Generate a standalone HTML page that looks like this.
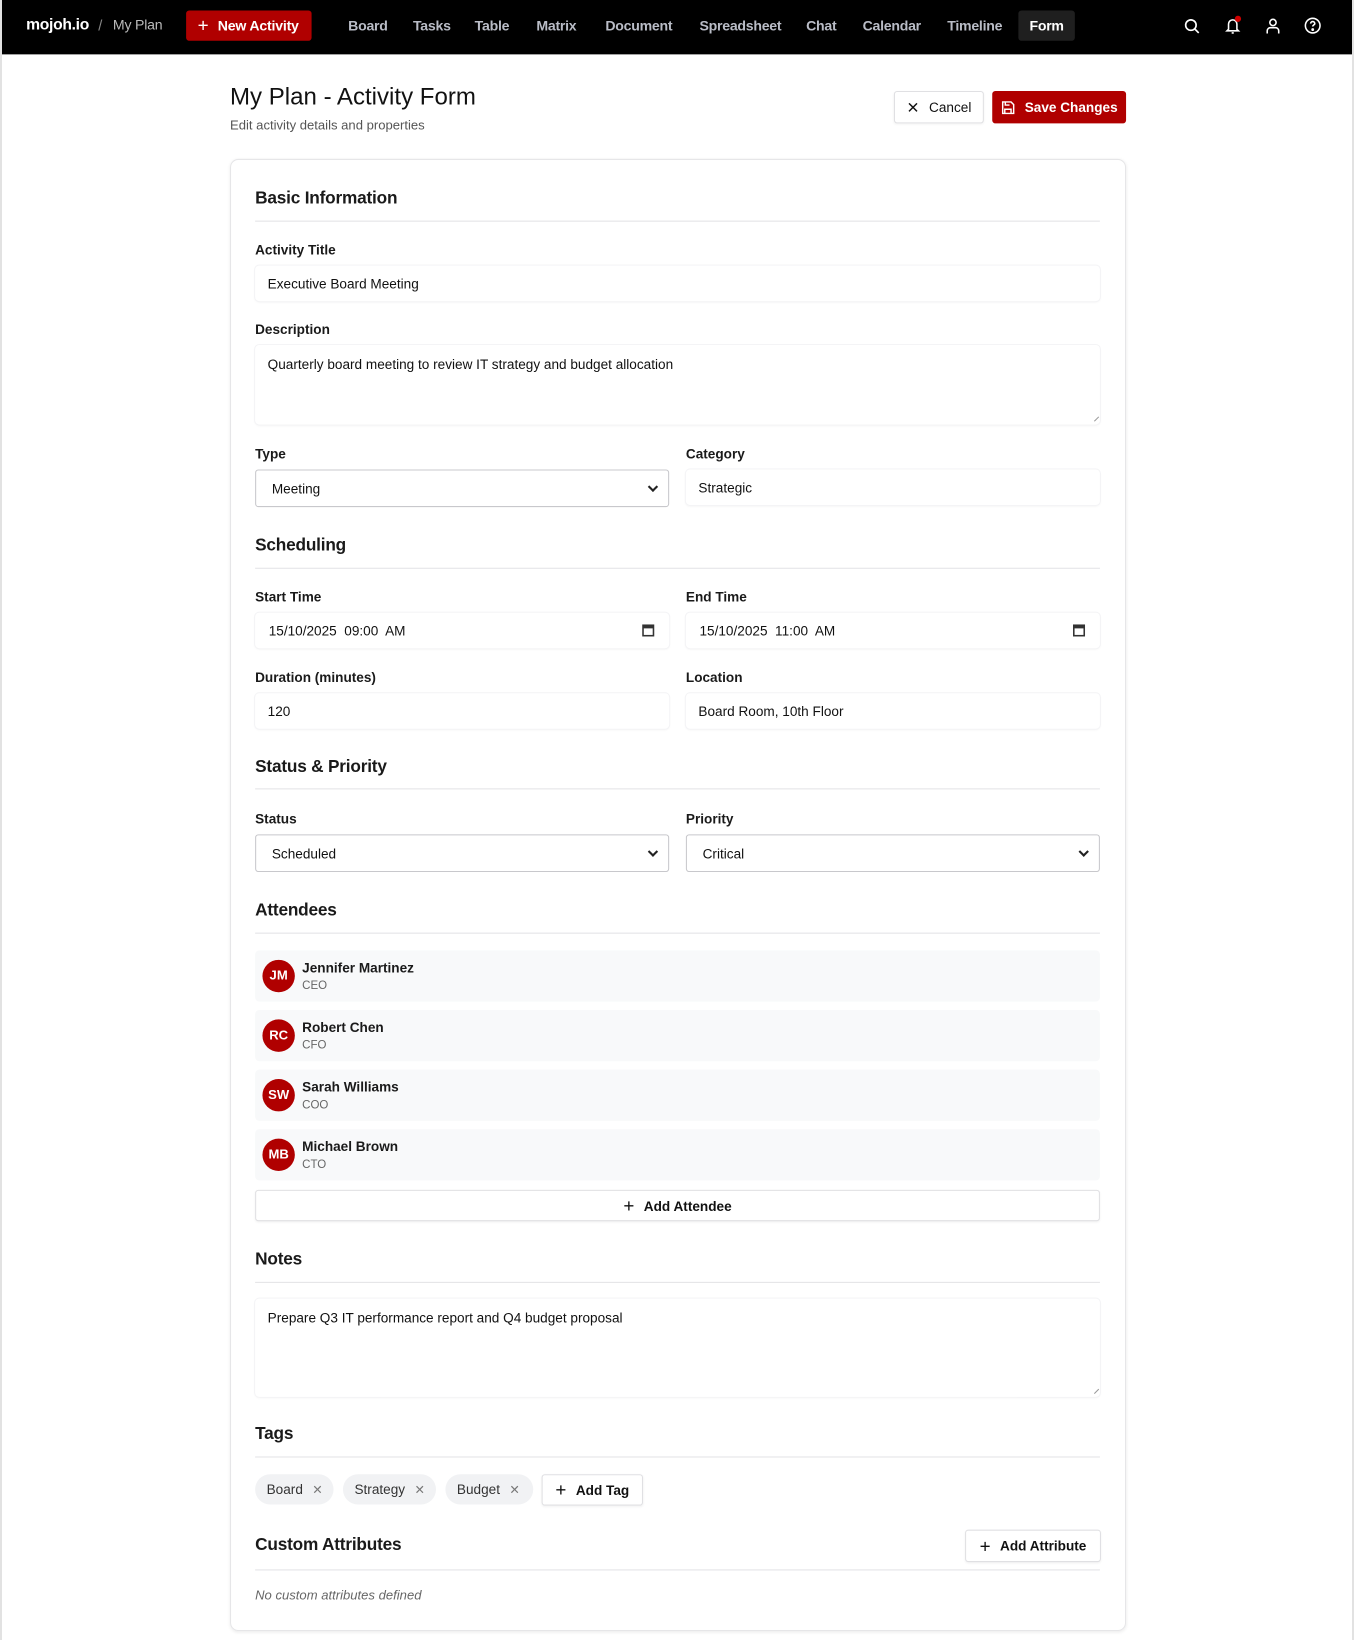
<!DOCTYPE html>
<html><head><meta charset="utf-8">
<style>
*{box-sizing:border-box;margin:0;padding:0}
html,body{width:1354px;height:1640px;overflow:hidden;background:#fff}
body{font-family:"Liberation Sans",Arial,sans-serif;color:#111}
#w{position:absolute;left:0;top:0;width:1295px;height:1569px;transform:scale(1.04556);transform-origin:0 0}
.a{position:absolute}
.nav{left:0;top:0;width:1295px;height:52px;background:#000}
.ni{position:absolute;top:10px;height:29px;line-height:29px;font-size:13.5px;font-weight:bold;color:#b9bcc6;white-space:nowrap;letter-spacing:-0.25px}
.h2{position:absolute;left:244px;font-size:16.5px;font-weight:bold;color:#1a1a1a;transform:translateY(-50%);letter-spacing:-0.2px}
.line{position:absolute;left:244px;width:808px;height:1px;background:#e3e3e6}
.lbl{position:absolute;font-size:13px;font-weight:bold;color:#1a1a1a;transform:translateY(-50%)}
.inp{position:absolute;background:#fff;border-radius:4px;box-shadow:0 0 0 1px #f4f4f6,0 1px 2px rgba(0,0,0,.05);font-size:13px;color:#111;padding-left:12px;display:flex;align-items:center}
.sel{position:absolute;background:#fff;border:1px solid #c8c8cc;border-radius:3px;font-size:13px;color:#111;padding-left:15px;display:flex;align-items:center}
.sel:after{content:"";position:absolute;right:11px;top:50%;width:5px;height:5px;border-right:2px solid #222;border-bottom:2px solid #222;transform:translateY(-70%) rotate(45deg)}
.att{position:absolute;left:244px;width:808px;height:49px;background:#f8f9fa;border-radius:4px}
.av{position:absolute;left:7px;top:9px;width:31px;height:31px;border-radius:50%;background:#b00000;color:#fff;font-size:12.5px;font-weight:bold;text-align:center;line-height:31px}
.nm{position:absolute;left:45px;top:9px;font-size:13px;font-weight:bold;color:#1a1a1a}
.rl{position:absolute;left:45px;top:28px;font-size:11px;color:#666}
.btn{position:absolute;background:#fff;border:1px solid #e0e0e3;border-radius:3px;font-size:13px;font-weight:bold;color:#111;display:flex;align-items:center;justify-content:center;gap:9px;box-shadow:0 1px 2px rgba(0,0,0,.05)}
.tag{position:absolute;top:1410px;height:29px;background:#f1f2f4;border-radius:15px;font-size:13px;color:#333;display:flex;align-items:center;padding-left:11px;gap:9px}
.tag span{color:#777;font-size:12px}
.plus{font-size:18px;font-weight:normal;line-height:1}
.rz{position:absolute;width:6px;height:6px;border-right:1px solid #999;transform:rotate(45deg)}
</style></head><body>
<div class="a" style="left:0;top:0;width:2px;height:1640px;background:#e2e2e2;z-index:5"></div>
<div class="a" style="left:1352px;top:0;width:2px;height:1640px;background:#e2e2e2;z-index:5"></div>
<div id="w">
<div class="a nav">
 <div class="a" style="left:25px;top:15px;font-size:15px;font-weight:bold;color:#fff;letter-spacing:-0.3px">mojoh.io</div>
 <div class="a" style="left:94px;top:16px;font-size:14px;color:#888">/</div>
 <div class="a" style="left:108px;top:16px;font-size:13.5px;color:#bbb;letter-spacing:-0.2px">My Plan</div>
 <div class="a" style="left:178px;top:10px;width:120px;height:29px;background:#b00000;border-radius:3px;color:#fff;font-size:13.5px;font-weight:bold;display:flex;align-items:center;padding-left:11px;gap:9px;letter-spacing:-0.2px"><span style="font-size:18px;font-weight:normal">+</span>New Activity</div>
 <div class="ni" style="left:333px">Board</div>
 <div class="ni" style="left:395px">Tasks</div>
 <div class="ni" style="left:454px">Table</div>
 <div class="ni" style="left:513px">Matrix</div>
 <div class="ni" style="left:579px">Document</div>
 <div class="ni" style="left:669px">Spreadsheet</div>
 <div class="ni" style="left:771px">Chat</div>
 <div class="ni" style="left:825px">Calendar</div>
 <div class="ni" style="left:906px">Timeline</div>
 <div class="ni" style="left:974px;width:54px;background:#1f1f1f;border-radius:3px;color:#fff;text-align:center">Form</div>
 <svg class="a" style="left:1132px;top:17px" width="16" height="16" viewBox="0 0 16 16" fill="none" stroke="#fff" stroke-width="1.6"><circle cx="7" cy="7" r="5"/><path d="M11 11l3.5 3.5"/></svg>
 <svg class="a" style="left:1171px;top:15px" width="18" height="18" viewBox="0 0 18 18" fill="none" stroke="#fff" stroke-width="1.5"><path d="M4 13V8a4 4 0 018 0v5l1.5 1.5h-11z"/><path d="M7 16.5h2"/><circle cx="13" cy="3" r="3" fill="#d00000" stroke="none"/></svg>
 <svg class="a" style="left:1210px;top:17px" width="15" height="16" viewBox="0 0 15 16" fill="none" stroke="#fff" stroke-width="1.5"><circle cx="7.5" cy="4.5" r="3"/><path d="M2 15v-2.5a3 3 0 013-3h5a3 3 0 013 3V15"/></svg>
 <svg class="a" style="left:1247px;top:16px" width="17" height="17" viewBox="0 0 17 17" fill="none" stroke="#fff" stroke-width="1.5"><circle cx="8.5" cy="8.5" r="7"/><path d="M6.5 6.5a2 2 0 114 .3c-.5 1-2 1.2-2 2.6"/><circle cx="8.5" cy="12.3" r=".6" fill="#fff"/></svg>
</div>

<div class="a" style="left:220px;top:79px;font-size:23px;font-weight:500;color:#111">My Plan - Activity Form</div>
<div class="a" style="left:220px;top:113px;font-size:12.5px;color:#555">Edit activity details and properties</div>
<div class="btn" style="left:855px;top:87px;width:86px;height:31px;font-weight:500"><span style="font-size:15px;font-weight:normal">✕</span>Cancel</div>
<div class="a" style="left:949px;top:87px;width:128px;height:31px;background:#b00000;border-radius:3px;color:#fff;font-size:13px;font-weight:bold;display:flex;align-items:center;justify-content:center;gap:9px"><svg width="14" height="14" viewBox="0 0 14 14" fill="none" stroke="#fff" stroke-width="1.4"><path d="M2 1.5h8l2.5 2.5v8.5h-10.5z"/><path d="M4 12.5V8.5h6v4M4.5 1.5v3h4"/></svg>Save Changes</div>

<div class="a" style="left:220px;top:152px;width:857px;height:1408px;border:1px solid #e6e6e8;border-radius:8px;box-shadow:0 1px 3px rgba(0,0,0,.08)"></div>

<div class="h2" style="top:190px">Basic Information</div><div class="line" style="top:211px"></div>
<div class="lbl" style="left:244px;top:239px">Activity Title</div>
<div class="inp" style="left:244px;top:254px;width:808px;height:34px">Executive Board Meeting</div>
<div class="lbl" style="left:244px;top:315px">Description</div>
<div class="inp" style="left:244px;top:330px;width:808px;height:76px;align-items:flex-start;padding-top:11px">Quarterly board meeting to review IT strategy and budget allocation</div>
<div class="rz" style="left:1044px;top:396px"></div>
<div class="lbl" style="left:244px;top:434px">Type</div>
<div class="sel" style="left:244px;top:449px;width:396px;height:36px">Meeting</div>
<div class="lbl" style="left:656px;top:434px">Category</div>
<div class="inp" style="left:656px;top:449px;width:396px;height:34px">Strategic</div>

<div class="h2" style="top:522px">Scheduling</div><div class="line" style="top:543px"></div>
<div class="lbl" style="left:244px;top:571px">Start Time</div>
<div class="inp" style="left:244px;top:586px;width:396px;height:34px;padding-left:13px">15/10/2025&nbsp; 09:00&nbsp; AM<svg class="a" style="right:14px;top:10px" width="12" height="13" viewBox="0 0 12 13"><rect x="1" y="2" width="10" height="10" fill="none" stroke="#333" stroke-width="1.5"/><rect x="1" y="2" width="10" height="3" fill="#333"/></svg></div>
<div class="lbl" style="left:656px;top:571px">End Time</div>
<div class="inp" style="left:656px;top:586px;width:396px;height:34px;padding-left:13px">15/10/2025&nbsp; 11:00&nbsp; AM<svg class="a" style="right:14px;top:10px" width="12" height="13" viewBox="0 0 12 13"><rect x="1" y="2" width="10" height="10" fill="none" stroke="#333" stroke-width="1.5"/><rect x="1" y="2" width="10" height="3" fill="#333"/></svg></div>
<div class="lbl" style="left:244px;top:648px">Duration (minutes)</div>
<div class="inp" style="left:244px;top:663px;width:396px;height:34px">120</div>
<div class="lbl" style="left:656px;top:648px">Location</div>
<div class="inp" style="left:656px;top:663px;width:396px;height:34px">Board Room, 10th Floor</div>

<div class="h2" style="top:734px">Status &amp; Priority</div><div class="line" style="top:754px"></div>
<div class="lbl" style="left:244px;top:783px">Status</div>
<div class="sel" style="left:244px;top:798px;width:396px;height:36px">Scheduled</div>
<div class="lbl" style="left:656px;top:783px">Priority</div>
<div class="sel" style="left:656px;top:798px;width:396px;height:36px">Critical</div>

<div class="h2" style="top:871px">Attendees</div><div class="line" style="top:892px"></div>
<div class="att" style="top:909px"><div class="av">JM</div><div class="nm">Jennifer Martinez</div><div class="rl">CEO</div></div>
<div class="att" style="top:966px"><div class="av">RC</div><div class="nm">Robert Chen</div><div class="rl">CFO</div></div>
<div class="att" style="top:1023px"><div class="av">SW</div><div class="nm">Sarah Williams</div><div class="rl">COO</div></div>
<div class="att" style="top:1080px"><div class="av">MB</div><div class="nm">Michael Brown</div><div class="rl">CTO</div></div>
<div class="btn" style="left:244px;top:1138px;width:808px;height:30px"><span class="plus">+</span>Add Attendee</div>

<div class="h2" style="top:1205px">Notes</div><div class="line" style="top:1226px"></div>
<div class="inp" style="left:244px;top:1242px;width:808px;height:94px;align-items:flex-start;padding-top:11px">Prepare Q3 IT performance report and Q4 budget proposal</div>
<div class="rz" style="left:1044px;top:1326px"></div>

<div class="h2" style="top:1372px">Tags</div><div class="line" style="top:1393px"></div>
<div class="tag" style="left:244px;width:75px">Board <span>✕</span></div>
<div class="tag" style="left:328px;width:89px">Strategy <span>✕</span></div>
<div class="tag" style="left:426px;width:84px">Budget <span>✕</span></div>
<div class="btn" style="left:518px;top:1410px;width:97px;height:30px"><span class="plus">+</span>Add Tag</div>

<div class="h2" style="top:1478px">Custom Attributes</div>
<div class="btn" style="left:923px;top:1463px;width:130px;height:31px"><span class="plus">+</span>Add Attribute</div>
<div class="line" style="top:1501px"></div>
<div class="a" style="left:244px;top:1519px;font-size:12.5px;font-style:italic;color:#666">No custom attributes defined</div>
</div>
</body></html>
